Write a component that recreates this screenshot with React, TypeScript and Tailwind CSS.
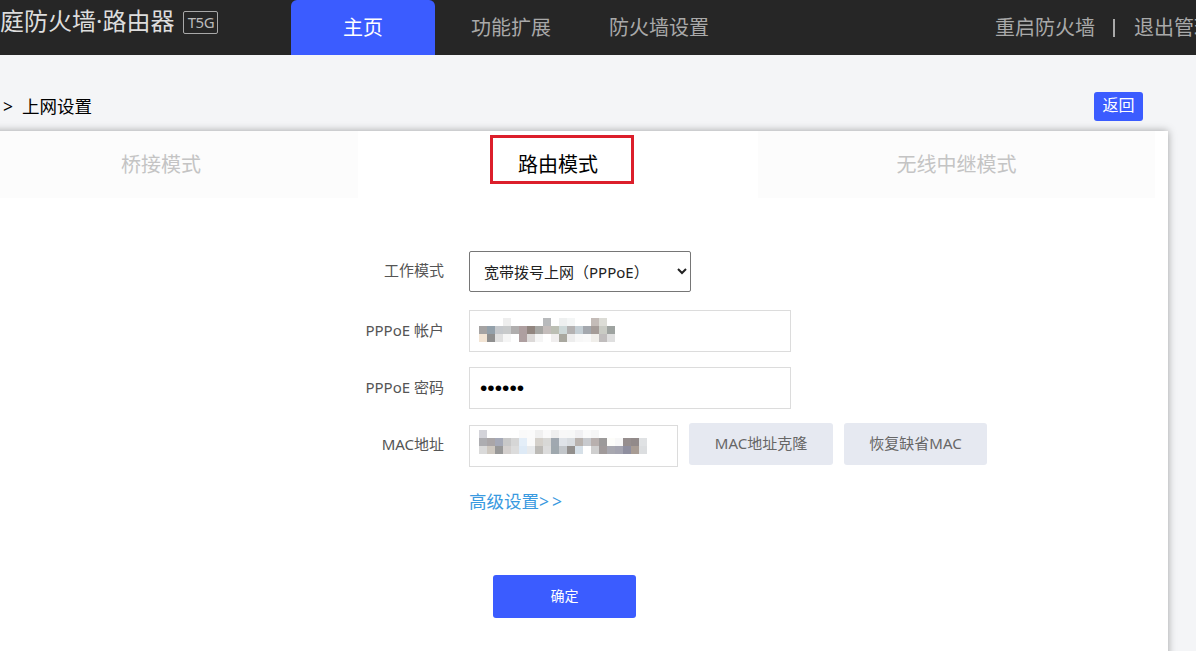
const accountRows = [
  ['', '', '', '#eeeeee', '', '', '', '', '#b8babc', '', '#eef0f0', '#f4f6f6', '', '', '#c4bcb8', '#dcdcd6', ''],
  ['#a5a3a3', '#93a0aa', '#c5c8cc', '#c8cacb', '#b0aeae', '#ae9fa0', '#91857f', '#a6a6a3', '#c4bdbb', '#bcbfb4', '#cdd8d8', '#b4b2b2', '#c4ced4', '#a4a8ae', '#a59c98', '#c9cbc4', '#9ea3a0'],
  ['#f2e4d4', '#8f8f8f', '#e0e0e0', '#f5f5f5', '', '#ae9fa0', '#dcd9d8', '#f5f5f5', '', '#f0eeee', '#a9a89f', '#ededed', '#f7f7f7', '#f9f9f9', '#f0eeea', '#c0bdbd', '#dfdfdf'],
]

const macRows = [
  ['#d3d3d9', '', '', '', '', '#fafafa', '#fbfbfb', '#f0f0f0', '#fafafa', '#efefef', '#f8f8f8', '#f7f8f8', '#f0f0f2', '#fafafa', '#f6f6f6', '', '', '', '', '', ''],
  ['#adadb1', '#aaa6a8', '#a5a9b7', '#c8c8c8', '#d6d6d6', '#e4eef8', '#fafafa', '#d4d0ca', '#d8d8d6', '#a0a8b0', '#dfe3e8', '#d8dce0', '#b8b2ae', '#c8cace', '#b8b0ae', '#9c9a9a', '#fdfdfa', '#f8f8f8', '#968e8e', '#928a8a', '#e0e2e4'],
  ['#dadada', '#cec8c0', '#989898', '#d4d0ce', '#dcdcdc', '#deeaf6', '#e8eaec', '#bcbab6', '#dcdcdc', '#9fa8ae', '#c2c6ca', '#928f8d', '#d6e0e8', '', '#cfcfcf', '#a09a9a', '#a8a8b0', '#a4a4b0', '#8f8f9f', '#a89c94', '#dcdee0'],
]

function Mosaic({ rows, className }: { rows: string[][]; className: string }) {
  return (
    <svg className={className} width={rows[0].length * 8} height={rows.length * 8}>
      {rows.map((row, y) =>
        row.map((fill, x) =>
          fill ? <rect key={`${x}-${y}`} x={x * 8} y={y * 8} width="8" height="8" fill={fill} /> : null
        )
      )}
    </svg>
  )
}

function Label({ text }: { text: string }) {
  return <label className="w-[480px] mr-[25px] pb-[2px] text-right text-[15px] text-[#555555]">{text}</label>
}

export default function App() {
  return (
    <div className="w-[1196px] h-[651px] overflow-hidden bg-[#f4f5f7] font-['Noto_Sans','Noto_Sans_CJK_SC',sans-serif]">
      <header className="flex h-[55px] bg-[#262626] text-[20px] text-[#a9a9a9] whitespace-nowrap">
        <div className="flex w-[291px] shrink-0 items-start pt-[3px]">
          <span className="text-[24px] leading-[36px] text-[#dddddd]">庭防火墙·路由器</span>
          <span className="ml-[9px] mt-[8px] flex h-[23px] w-[35px] items-center justify-center rounded-[2px] border border-[#a8a8a8] text-[15px] tracking-[-0.5px] text-[#bbbbbb]">
            T5G
          </span>
        </div>
        <a className="flex w-[144px] shrink-0 items-center justify-center rounded-t-[6px] bg-[#3b5cff] text-white">主页</a>
        <a className="ml-[36px] flex shrink-0 items-center">功能扩展</a>
        <a className="ml-[58px] flex shrink-0 items-center">防火墙设置</a>
        <a className="ml-[286px] flex shrink-0 items-center">重启防火墙</a>
        <span className="ml-[18px] mr-[19px] mt-[19px] h-[18px] w-[2px] shrink-0 bg-[#a9a9a9]" />
        <a className="flex shrink-0 items-center">退出管理</a>
      </header>

      <div className="flex h-[75px] justify-between pl-[3px] pr-[53px] pt-[37px]">
        <div className="text-[17.5px] leading-[28px] text-black">
          &gt;<span className="ml-[9px]">上网设置</span>
        </div>
        <button className="h-[29px] w-[49px] rounded-[3px] bg-[#3b5cff] pb-[3px] text-[16px] text-white">返回</button>
      </div>

      <div className="ml-[-36px] h-[600px] w-[1204px] bg-white shadow-[0_0_8px_rgba(0,0,0,0.35)] mt-[1px]">
        <div className="flex h-[67px] text-[20px] text-[#c4c4c4]">
          <div className="flex w-[394px] items-center justify-center bg-[#fcfcfc]">桥接模式</div>
          <div className="relative flex w-[400px] items-center justify-center text-black">
            路由模式
            <span className="absolute left-[132px] top-[4px] h-[49px] w-[144px] border-[3px] border-[#dc1f2b]" />
          </div>
          <div className="flex w-[397px] items-center justify-center bg-[#fcfcfc]">无线中继模式</div>
        </div>

        <div className="mt-[53px] flex items-center">
          <Label text="工作模式" />
          <select className="h-[41px] w-[222px] rounded-[2px] border border-[#767676] bg-white pl-[10px] text-[15px] text-[#222222]">
            <option>宽带拨号上网（PPPoE）</option>
          </select>
        </div>

        <div className="mt-[18px] flex items-center">
          <Label text="PPPoE 帐户" />
          <div className="relative h-[42px] w-[322px] border border-[#dcdcdc]">
            <Mosaic rows={accountRows} className="absolute left-[9px] top-[7px]" />
          </div>
        </div>

        <div className="mt-[15px] flex items-center">
          <Label text="PPPoE 密码" />
          <input
            type="password"
            readOnly
            value="123456"
            className="h-[42px] w-[322px] border border-[#dcdcdc] px-[10px] font-['Liberation_Sans',sans-serif] text-[21px] text-black"
          />
        </div>

        <div className="mt-[14px] flex h-[44px] items-start">
          <div className="flex h-[44px] items-center">
            <Label text="MAC地址" />
          </div>
          <div className="relative mt-[2px] h-[42px] w-[209px] border border-[#dcdcdc]">
            <Mosaic rows={macRows} className="absolute left-[9px] top-[4px]" />
          </div>
          <button className="ml-[11px] h-[42px] w-[144px] rounded-[3px] bg-[#e6e9f1] pb-[2px] text-[15px] text-[#666666]">MAC地址克隆</button>
          <button className="ml-[11px] h-[42px] w-[143px] rounded-[3px] bg-[#e6e9f1] pb-[2px] text-[15px] text-[#666666]">恢复缺省MAC</button>
        </div>

        <a className="ml-[505px] mt-[22px] block h-[24px] w-fit text-[17.5px] leading-[24px] text-[#3a9ae0]">
          高级设置<span className="tracking-[3px]">&gt;&gt;</span>
        </a>

        <button className="ml-[529px] mt-[62px] block h-[43px] w-[143px] rounded-[3px] bg-[#3b5cff] pb-[2px] text-[14px] text-white">确定</button>
      </div>
    </div>
  )
}
